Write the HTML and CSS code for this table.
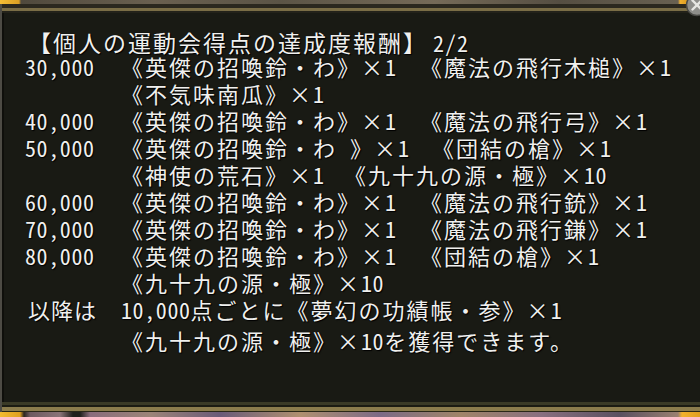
FILE: index.html
```html
<!DOCTYPE html>
<html lang="ja">
<head>
<meta charset="utf-8">
<link rel="stylesheet" href="styles.css">
</head>
<body>
<div class="scene">
  <div class="strip strip-top"></div>
  <div class="frame">
    <div class="band band-a"></div>
    <div class="band band-gold"></div>
    <div class="band band-b"></div>
    <div class="panel">
      <div class="title"><span class="title-text">【個人の運動会得点の達成度報酬】</span><span class="num page">2/2</span></div>
      <div class="row"><span class="amt num">30,000</span><span class="item first">《英傑の招喚鈴・わ》×<span class="num">1</span></span><span class="item">《魔法の飛行木槌》×<span class="num">1</span></span></div>
      <div class="row"><span class="amt"></span><span class="item">《不気味南瓜》×<span class="num">1</span></span></div>
      <div class="row"><span class="amt num">40,000</span><span class="item first">《英傑の招喚鈴・わ》×<span class="num">1</span></span><span class="item">《魔法の飛行弓》×<span class="num">1</span></span></div>
      <div class="row"><span class="amt num">50,000</span><span class="item first wide">《英傑の招喚鈴・わ　》×<span class="num">1</span></span><span class="item">《団結の槍》×<span class="num">1</span></span></div>
      <div class="row"><span class="amt"></span><span class="item first narrow">《神使の荒石》×<span class="num">1</span></span><span class="item">《九十九の源・極》×<span class="num">10</span></span></div>
      <div class="row"><span class="amt num">60,000</span><span class="item first">《英傑の招喚鈴・わ》×<span class="num">1</span></span><span class="item">《魔法の飛行銃》×<span class="num">1</span></span></div>
      <div class="row"><span class="amt num">70,000</span><span class="item first">《英傑の招喚鈴・わ》×<span class="num">1</span></span><span class="item">《魔法の飛行鎌》×<span class="num">1</span></span></div>
      <div class="row"><span class="amt num">80,000</span><span class="item first">《英傑の招喚鈴・わ》×<span class="num">1</span></span><span class="item">《団結の槍》×<span class="num">1</span></span></div>
      <div class="row"><span class="amt"></span><span class="item">《九十九の源・極》×<span class="num">10</span></span></div>
      <div class="row"><span class="amt lead">以降は</span><span class="item"><span class="num">10,000</span>点ごとに《夢幻の功績帳・参》×<span class="num">1</span></span></div>
      <div class="row last"><span class="amt"></span><span class="item">《九十九の源・極》×<span class="num">10</span>を獲得できます。</span></div>
    </div>
    <div class="band band-olive"></div>
    <div class="band band-c"></div>
    <div class="band band-gold2"></div>
    <div class="band band-d"></div>
  </div>
  <div class="strip strip-bottom"></div>
  <svg class="close" width="24" height="24" viewBox="0 0 24 24" aria-hidden="true">
    <circle cx="12" cy="12" r="10.5" fill="#8e8e8a" stroke="#4a4a46" stroke-width="1.5"/>
    <path d="M7.5 7.5 L16.5 16.5 M16.5 7.5 L7.5 16.5" stroke="#e6e6e2" stroke-width="2.4" stroke-linecap="round"/>
  </svg>
</div>
</body>
</html>
```

FILE: styles.css
```css
html, body {
  margin: 0;
  padding: 0;
}
body {
  width: 700px;
  height: 417px;
  overflow: hidden;
  background: #3a352c;
  font-family: "Noto Sans CJK JP", "Noto Sans", sans-serif;
}
.scene {
  position: relative;
  width: 700px;
  height: 417px;
  display: flex;
  flex-direction: column;
  overflow: hidden;
}
.strip {
  flex: none;
}
.strip-top {
  height: 4px;
  background:
    linear-gradient(90deg, #f4bd35 0, #dca024 19px, transparent 21px),
    linear-gradient(90deg, transparent 678px, #f0b030 680px, #d99a1e 688px, transparent 689px),
    linear-gradient(90deg, #4c463a 0, #6a6050 22%, #5b5446 40%, #756a58 62%, #554e42 80%, #6c6454 100%);
}
.strip-bottom {
  height: 5px;
  background:
    linear-gradient(90deg, #f3bb30 0, #e0a020 20px, transparent 24px),
    linear-gradient(90deg, transparent 678px, #f2b12c 682px, #e0a020 700px),
    linear-gradient(90deg, #2a2520 24px, #6e5a60 30px, #8a7478 60px, #20201c 73px, #20201c 80px, #8a6c7c 90px, #9c8478 150px, #6a5a78 220px, #b09070 300px, #7c6a86 380px, #a08468 460px, #8a7080 540px, #5a5060 620px, #9a8070 678px);
}
.frame {
  flex: 1;
  display: flex;
  flex-direction: column;
  border-left: 2px solid #4d4b44;
  background: #191a14;
}
.band {
  flex: none;
}
.band-a {
  height: 4px;
  background: #2b281f;
}
.band-gold {
  height: 3px;
  background: #7a6d46;
}
.band-b {
  height: 2px;
  background: #23221a;
}
.band-olive {
  height: 3px;
  background: #3a3a26;
}
.band-c {
  height: 2px;
  background: #1b1b12;
}
.band-gold2 {
  height: 4px;
  background: #8b7c4c;
}
.band-d {
  height: 1px;
  background: #2a2818;
}
.panel {
  flex: 1;
  display: flex;
  flex-direction: column;
  padding-top: 16px;
  padding-left: 2px;
  background: #191a14;
  border-left: 2px solid #0f0f0b;
  color: #f0f0ee;
  font-size: 22px;
  letter-spacing: 2px;
  font-feature-settings: "hwid" 1;
  text-shadow: 1px 1px 1px #000, 0 0 1px #000;
  white-space: nowrap;
}
.num {
  letter-spacing: 0.6px;
}
.title {
  display: flex;
  height: 24px;
  line-height: 26px;
  padding-left: 22px;
  font-size: 23px;
  letter-spacing: 2px;
}
.title .page {
  margin-left: 5px;
  font-size: 22px;
  letter-spacing: 1px;
}
.row {
  display: flex;
  height: 27px;
  line-height: 27px;
  padding-left: 19px;
}
.row.last {
  margin-top: 4px;
}
.amt {
  flex: none;
  width: 96px;
}
.amt.lead {
  width: 93px;
  margin-left: 3px;
  letter-spacing: 1px;
}
.item {
  flex: none;
}
.item.first {
  width: 299px;
}
.item.first.wide {
  width: 311px;
}
.item.first.narrow {
  width: 223px;
}
.close {
  position: absolute;
  top: -7px;
  right: -9px;
}
```
